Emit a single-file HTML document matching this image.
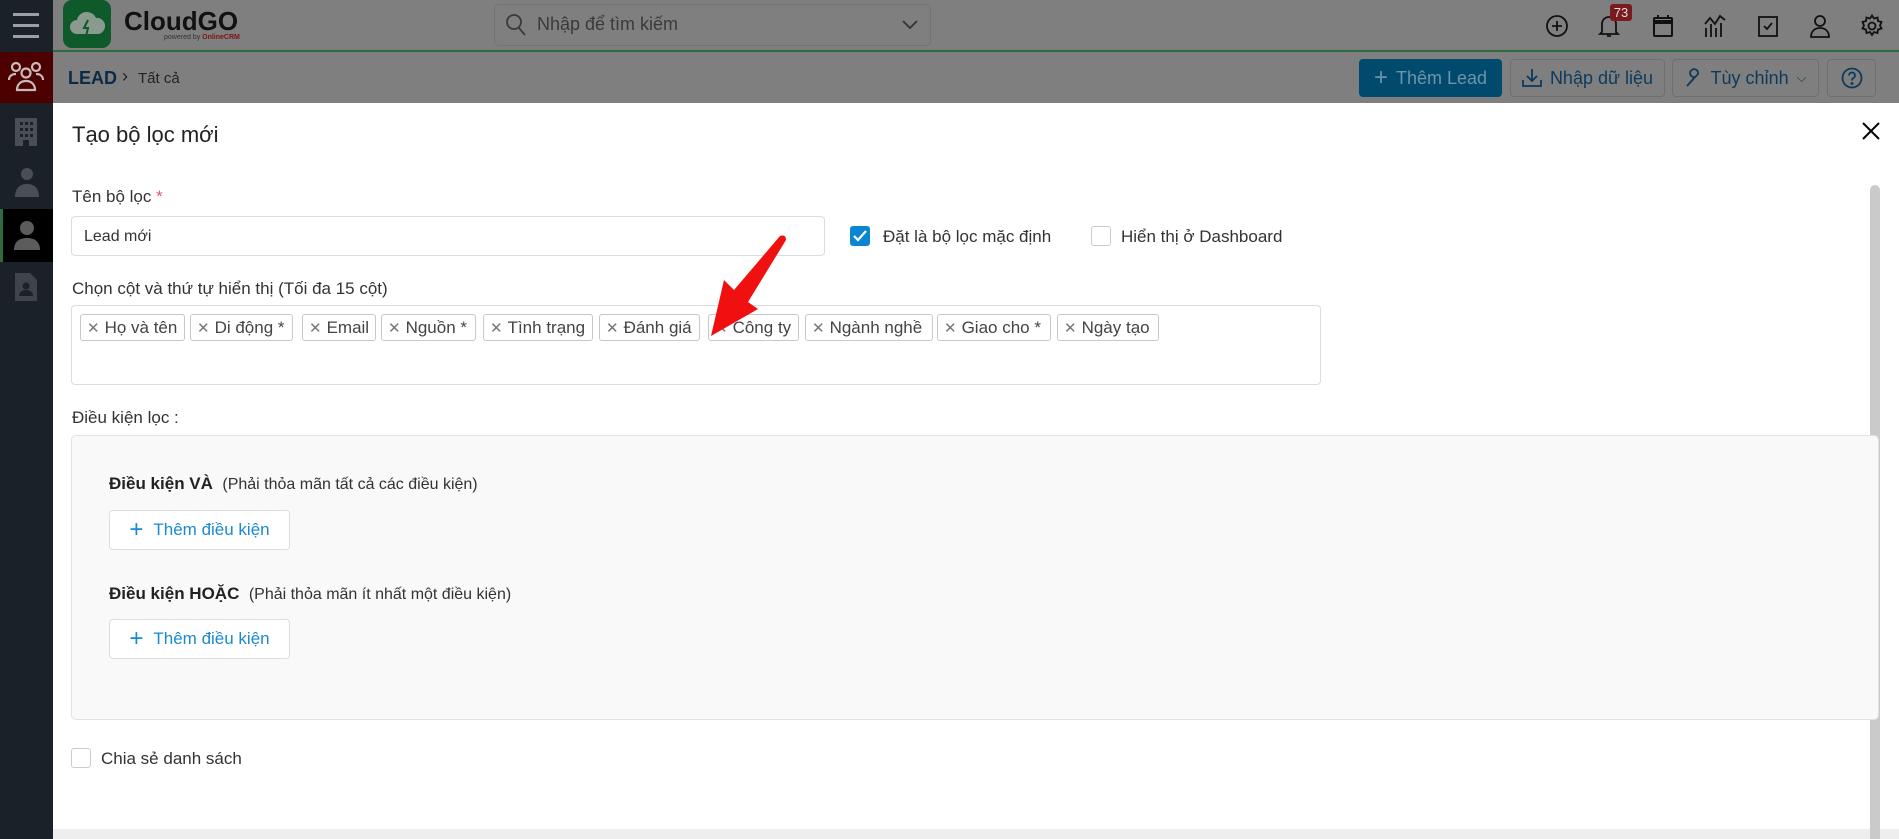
<!DOCTYPE html>
<html><head><meta charset="utf-8"><style>
*{box-sizing:border-box;margin:0;padding:0}
body{width:1899px;height:839px;overflow:hidden;position:relative;background:#fff;font-family:"Liberation Sans","DejaVu Sans",sans-serif;color:#222}
.a{position:absolute}
.side{left:0;top:0;width:53px;height:839px;background:#1a2129}
.top{left:53px;top:0;width:1846px;height:52px;background:#7f7f7f;border-bottom:2px solid #2e6b3e}
.bc{left:53px;top:52px;width:1846px;height:51px;background:#7f7f7f}
.btn{position:absolute;top:59px;height:38px;border:1px solid #6e6e6e;border-radius:4px;color:#0d3a5c;font-size:18px;display:flex;align-items:center;justify-content:center;gap:8px}
.lbl{font-size:17px;color:#333}
.tag{position:absolute;top:314px;height:27px;border:1px solid #c8c8c8;border-radius:3px;font-size:17px;color:#444;display:flex;align-items:center;padding-left:6px;white-space:nowrap}
.tag b{font-weight:normal;color:#777;margin-right:5px;font-size:15px}
.cb{position:absolute;width:20px;height:20px;border:1px solid #ccc;border-radius:3px;background:#fff}
.addb{position:absolute;left:109px;width:181px;height:40px;background:#fff;border:1px solid #ddd;border-radius:4px;color:#1a8ad0;font-size:17px;display:flex;align-items:center;justify-content:center;gap:10px}
</style></head><body>
<div class="a side"></div>
<div class="a" style="left:13px;top:13px;width:26px;height:3px;background:#9aa0a6"></div>
<div class="a" style="left:13px;top:24px;width:26px;height:3px;background:#9aa0a6"></div>
<div class="a" style="left:13px;top:35px;width:26px;height:3px;background:#9aa0a6"></div>
<div class="a" style="left:0;top:52px;width:53px;height:51px;background:#4d0000"></div>
<svg class="a" style="left:7px;top:60px" width="38" height="34" viewBox="0 0 38 34" fill="none" stroke="#c9b9b9" stroke-width="2.2"><circle cx="9" cy="7" r="4"/><circle cx="29" cy="7" r="4"/><circle cx="19" cy="13" r="4.5"/><path d="M2 20c0-4 3-6 7-6M36 20c0-4-3-6-7-6M10 30c0-6 4-9 9-9s9 3 9 9z"/></svg>
<svg class="a" style="left:13px;top:118px" width="26" height="28" viewBox="0 0 26 28"><rect x="2" y="0" width="22" height="28" fill="#4a4f55"/><g fill="#1a2129"><rect x="7" y="4" width="3" height="3"/><rect x="12" y="4" width="3" height="3"/><rect x="17" y="4" width="3" height="3"/><rect x="7" y="10" width="3" height="3"/><rect x="12" y="10" width="3" height="3"/><rect x="17" y="10" width="3" height="3"/><rect x="7" y="16" width="3" height="3"/><rect x="12" y="16" width="3" height="3"/><rect x="17" y="16" width="3" height="3"/><rect x="10" y="22" width="6" height="6"/></g></svg>
<svg class="a" style="left:14px;top:167px" width="26" height="30" viewBox="0 0 26 30" fill="#4a4f55"><circle cx="13" cy="7" r="6"/><path d="M1 30c0-9 5-13 12-13s12 4 12 13z"/></svg>
<div class="a" style="left:0;top:209px;width:53px;height:53px;background:#000;border-left:3px solid #2e6b3e"></div>
<svg class="a" style="left:13px;top:220px" width="28" height="30" viewBox="0 0 28 30" fill="#5c5c5c"><circle cx="14" cy="8" r="7"/><path d="M1 30c0-9 6-12 13-12s13 3 13 12z"/></svg>
<svg class="a" style="left:15px;top:273px" width="22" height="28" viewBox="0 0 22 28" fill="#3f444a"><path d="M0 0h15l7 7v21H0z"/><circle cx="11" cy="13" r="3.5" fill="#1a2129"/><path d="M4 23c0-4 3-6 7-6s7 2 7 6z" fill="#1a2129"/></svg>

<div class="a top"></div>
<div class="a" style="left:63px;top:0;width:48px;height:48px;background:#0e5a2b;border-radius:9px"></div>
<svg class="a" style="left:68px;top:8px" width="38" height="32" viewBox="0 0 38 32"><path d="M9 26a7 7 0 0 1 0-14 10 10 0 0 1 19-2 8 8 0 0 1 2 16z" fill="#8a9a8f"/><path d="M20 12l-4 8h4l-2 8" stroke="#0e5a2b" stroke-width="2" fill="none"/></svg>
<div class="a" style="left:124px;top:6px;font-size:26px;font-weight:bold;color:#111">CloudGO</div>
<div class="a" style="left:164px;top:34px;font-size:7px;color:#333">powered by <span style="color:#7a1515;font-weight:bold">OnlineCRM</span></div>
<div class="a" style="left:494px;top:4px;width:437px;height:42px;border:1px solid #737373;border-radius:5px"></div>
<svg class="a" style="left:506px;top:14px" width="20" height="22" viewBox="0 0 20 22" fill="none" stroke="#3a3a3a" stroke-width="1.8"><circle cx="8" cy="8" r="7"/><path d="M13 14l6 7"/></svg>
<div class="a" style="left:537px;top:14px;font-size:18px;color:#3a3a3a">Nhập để tìm kiếm</div>
<svg class="a" style="left:902px;top:20px" width="16" height="10" viewBox="0 0 16 10" fill="none" stroke="#333" stroke-width="1.8"><path d="M1 1l7 7 7-7"/></svg>
<svg class="a" style="left:1545px;top:14px" width="24" height="24" viewBox="0 0 24 24" fill="none" stroke="#111" stroke-width="1.8"><circle cx="12" cy="12" r="10"/><path d="M12 7v10M7 12h10"/></svg>
<svg class="a" style="left:1598px;top:14px" width="22" height="24" viewBox="0 0 22 24" fill="none" stroke="#111" stroke-width="1.8"><path d="M4 18V10a7 7 0 0 1 14 0v8l2 2H2zM9 22h4"/></svg>
<div class="a" style="left:1610px;top:4px;width:22px;height:17px;background:#7a1a1f;border-radius:3px;color:#ddd;font-size:13px;text-align:center;line-height:17px">73</div>
<svg class="a" style="left:1652px;top:14px" width="22" height="24" viewBox="0 0 22 24" fill="none" stroke="#111" stroke-width="2"><rect x="2" y="4" width="18" height="18" rx="1"/><path d="M2 8h18" stroke-width="4"/><path d="M6 1v4M16 1v4"/></svg>
<svg class="a" style="left:1703px;top:14px" width="24" height="24" viewBox="0 0 24 24" fill="none" stroke="#111" stroke-width="1.8"><path d="M2 10l5-6 5 6 5-8 5 4M3 14v9M8 10v13M13 14v9M18 9v14"/></svg>
<svg class="a" style="left:1757px;top:14px" width="22" height="24" viewBox="0 0 22 24" fill="none" stroke="#111" stroke-width="1.8"><rect x="2" y="3" width="18" height="19"/><path d="M7 12l3 3 5-6"/></svg>
<svg class="a" style="left:1809px;top:14px" width="22" height="24" viewBox="0 0 22 24" fill="none" stroke="#111" stroke-width="1.8"><circle cx="11" cy="7" r="5"/><path d="M2 23c0-6 4-9 9-9s9 3 9 9z"/></svg>
<svg class="a" style="left:1860px;top:14px" width="24" height="24" viewBox="0 0 24 24" fill="none" stroke="#111" stroke-width="1.8"><circle cx="12" cy="12" r="3.5"/><path d="M12 1.5l2 3 3.5-1 .5 3.5 3.5 1-1.5 3.5 1.5 3-3.5 1-.5 3.5-3.5-1-2 3-2-3-3.5 1-.5-3.5-3.5-1 1.5-3-1.5-3.5 3.5-1 .5-3.5 3.5 1z"/></svg>

<div class="a bc"></div>
<div class="a" style="left:68px;top:68px;font-size:18px;font-weight:bold;color:#0d2a45">LEAD</div>
<div class="a" style="left:122px;top:66px;font-size:18px;color:#222">›</div>
<div class="a" style="left:138px;top:70px;font-size:15px;color:#222">Tất cả</div>
<div class="btn" style="left:1359px;width:143px;background:#004a6e;border-color:#004a6e;color:#6f93aa"><span style="font-size:24px">+</span>Thêm Lead</div>
<div class="btn" style="left:1510px;width:155px"><svg width="20" height="20" viewBox="0 0 20 20" fill="none" stroke="#0d3a5c" stroke-width="1.8"><path d="M10 1v12M5 8l5 5 5-5M1 12v6h18v-6"/></svg>Nhập dữ liệu</div>
<div class="btn" style="left:1672px;width:147px"><svg width="18" height="20" viewBox="0 0 18 20" fill="none" stroke="#0d3a5c" stroke-width="1.8"><path d="M2 18l8-9a4 4 0 1 1 3-3z"/></svg>Tùy chỉnh <span style="font-size:13px">⌵</span></div>
<div class="btn" style="left:1827px;width:49px"><svg width="22" height="22" viewBox="0 0 22 22" fill="none" stroke="#0d3a5c" stroke-width="1.8"><circle cx="11" cy="11" r="9.5"/><path d="M8 8.5a3 3 0 1 1 4 2.8c-1 .5-1 1.2-1 2.2"/><circle cx="11" cy="16.5" r=".6"/></svg></div>

<div class="a" style="left:53px;top:103px;width:1846px;height:726px;background:#fff"></div>
<div class="a" style="left:53px;top:829px;width:1846px;height:10px;background:#eee"></div>
<div class="a" style="left:1870px;top:185px;width:10px;height:654px;background:#cacaca;border-radius:5px 5px 0 0"></div>
<div class="a" style="left:72px;top:122px;font-size:22px;color:#222">Tạo bộ lọc mới</div>
<svg class="a" style="left:1862px;top:122px" width="18" height="18" viewBox="0 0 18 18" stroke="#000" stroke-width="2"><path d="M1 1l16 16M17 1L1 17"/></svg>

<div class="a lbl" style="left:72px;top:187px">Tên bộ lọc <span style="color:#e05a6a">*</span></div>
<div class="a" style="left:71px;top:216px;width:754px;height:40px;border:1px solid #ddd;border-radius:4px;font-size:16px;color:#333;padding:11px 12px">Lead mới</div>
<div class="cb" style="left:850px;top:226px;background:#0a86d0;border-color:#0a86d0"><svg width="18" height="18" viewBox="0 0 18 18" fill="none" stroke="#fff" stroke-width="2.2"><path d="M3 9l4 4 8-9"/></svg></div>
<div class="a lbl" style="left:883px;top:227px">Đặt là bộ lọc mặc định</div>
<div class="cb" style="left:1091px;top:226px"></div>
<div class="a lbl" style="left:1121px;top:227px">Hiển thị ở Dashboard</div>

<div class="a lbl" style="left:72px;top:279px">Chọn cột và thứ tự hiển thị (Tối đa 15 cột)</div>
<div class="a" style="left:71px;top:305px;width:1250px;height:80px;border:1px solid #ddd;border-radius:4px"></div>
<div class="tag" style="left:80px;width:105px"><b>✕</b>Họ và tên</div>
<div class="tag" style="left:190px;width:103px"><b>✕</b>Di động *</div>
<div class="tag" style="left:302px;width:74px"><b>✕</b>Email</div>
<div class="tag" style="left:381px;width:95px"><b>✕</b>Nguồn *</div>
<div class="tag" style="left:483px;width:110px"><b>✕</b>Tình trạng</div>
<div class="tag" style="left:599px;width:101px"><b>✕</b>Đánh giá</div>
<div class="tag" style="left:708px;width:91px"><b>✕</b>Công ty</div>
<div class="tag" style="left:805px;width:128px"><b>✕</b>Ngành nghề</div>
<div class="tag" style="left:937px;width:114px"><b>✕</b>Giao cho *</div>
<div class="tag" style="left:1057px;width:102px"><b>✕</b>Ngày tạo</div>
<svg class="a" style="left:700px;top:230px" width="95" height="115" viewBox="0 0 95 115"><path d="M80 6 Q86 4 86 10 L48 72 L58 79 L11 106 L24 50 L34 60 Z" fill="#f01010"/></svg>

<div class="a lbl" style="left:72px;top:408px">Điều kiện lọc :</div>
<div class="a" style="left:71px;top:435px;width:1808px;height:285px;background:#f9f9f9;border:1px solid #e2e2e2;border-radius:5px"></div>
<div class="a lbl" style="left:109px;top:474px;color:#222"><b>Điều kiện VÀ</b>&nbsp; <span style="font-size:16px;color:#333">(Phải thỏa mãn tất cả các điều kiện)</span></div>
<div class="addb" style="top:510px"><span style="font-size:24px;font-weight:300">+</span>Thêm điều kiện</div>
<div class="a lbl" style="left:109px;top:584px;color:#222"><b>Điều kiện HOẶC</b>&nbsp; <span style="font-size:16px;color:#333">(Phải thỏa mãn ít nhất một điều kiện)</span></div>
<div class="addb" style="top:619px"><span style="font-size:24px;font-weight:300">+</span>Thêm điều kiện</div>

<div class="cb" style="left:71px;top:748px"></div>
<div class="a lbl" style="left:101px;top:749px">Chia sẻ danh sách</div>
</body></html>
